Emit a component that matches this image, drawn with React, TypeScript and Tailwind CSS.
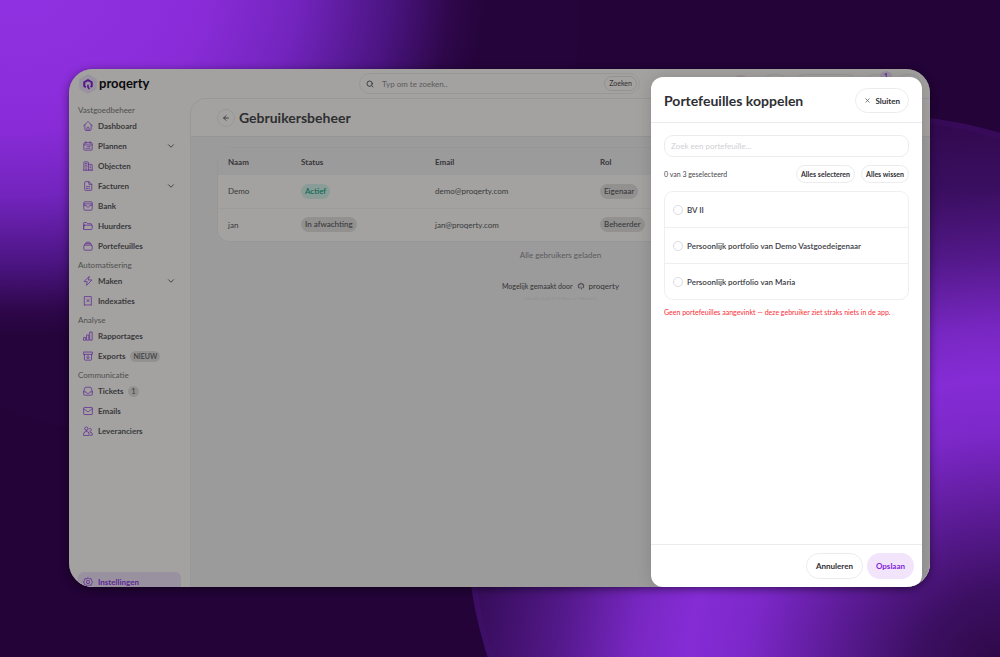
import React, { useState } from 'react';
import { ArrowLeft, ChevronDown, Search, X } from 'lucide-react';

type IconName =
  | 'home'
  | 'calendar'
  | 'building'
  | 'file'
  | 'bank'
  | 'folder'
  | 'stack'
  | 'bolt'
  | 'receipt'
  | 'chart'
  | 'archive'
  | 'inbox'
  | 'mail'
  | 'users'
  | 'settings';

const ICONS: Record<IconName, React.ReactNode> = {
  home: <path d="M1.5 11.5 10.6 2.6a2 2 0 0 1 2.8 0l9.1 8.9M4.5 9v11.5a2 2 0 0 0 2 2h11a2 2 0 0 0 2-2V9M9.5 22v-5a2.5 2.5 0 0 1 5 0v5" />,
  calendar: <path d="M2 5.5A1.5 1.5 0 0 1 3.5 4h17A1.5 1.5 0 0 1 22 5.5V20.5a1.5 1.5 0 0 1-1.5 1.5h-17A1.5 1.5 0 0 1 2 20.5ZM2 9.5h20M7 1.5v5M17 1.5v5M7 17.5h2M11 17.5h2M11 13.5h2M15 13.5h2M15 17.5h2" />,
  building: <path d="M2 22V3.5A1.5 1.5 0 0 1 3.5 2h8A1.5 1.5 0 0 1 13 3.5V22M13 8h7.5A1.5 1.5 0 0 1 22 9.5V22M1 22h22M5.5 6h4M5.5 10h4M5.5 14h4M7.5 22v-4M16.5 12h2M16.5 16h2M16.5 22v-2" />,
  file: <path d="M4 3a1.5 1.5 0 0 1 1.5-1.5H14L21 8v13a1.5 1.5 0 0 1-1.5 1.5h-14A1.5 1.5 0 0 1 4 21ZM14 1.5V8h7M8 18h4M8 13.5h8M15 18h1" />,
  bank: <path d="M2 4a2 2 0 0 1 2-2h16a2 2 0 0 1 2 2v16a2 2 0 0 1-2 2H4a2 2 0 0 1-2-2ZM2 7h20M2 10.5h5.5c.5 5.5 8.5 5.5 9 0H22" />,
  folder: <path d="M1.5 19.5V5A1.5 1.5 0 0 1 3 3.5h5.5l2.5 3h8A1.5 1.5 0 0 1 20.5 8v2M3.5 10H21a1.5 1.5 0 0 1 1.5 1.7l-1 7.5a1.5 1.5 0 0 1-1.5 1.3H3a1.5 1.5 0 0 1-1.5-1.5l.5-7.5A1.5 1.5 0 0 1 3.5 10Z" />,
  stack: <path d="M2 12a2 2 0 0 1 2-2h16a2 2 0 0 1 2 2v8a2 2 0 0 1-2 2H4a2 2 0 0 1-2-2ZM3.5 10l1.5-3.5h14l1.5 3.5M6.5 6.5 8 3h8l1.5 3.5" />,
  bolt: <path d="M14.5 1.5 2.5 13.5H10l-1.5 9 13-13h-8Z" />,
  receipt: <path d="M4 1.5h16v21l-3-2-2.5 2-2.5-2-2.5 2-2.5-2-3 2ZM9 8l6 6M15 8l-6 6" />,
  chart: <path d="M2 15.5h4.5V22H2ZM9.5 9.5H14V22H9.5ZM17 2.5h5V22h-5Z" />,
  archive: <path d="M1.5 2.5h21V8h-21ZM3.5 8v12.5A1.5 1.5 0 0 0 5 22h14a1.5 1.5 0 0 0 1.5-1.5V8M12 10.5V18M8.5 15l3.5 3.5 3.5-3.5" />,
  inbox: <path d="M1.5 14 4.5 4.5A2 2 0 0 1 6.5 3h11a2 2 0 0 1 2 1.5l3 9.5v6a2 2 0 0 1-2 2h-17a2 2 0 0 1-2-2ZM1.5 14H7c.5 5 9.5 5 10 0h5.5" />,
  mail: <path d="M1.5 5A1.5 1.5 0 0 1 3 3.5h18A1.5 1.5 0 0 1 22.5 5v14a1.5 1.5 0 0 1-1.5 1.5H3A1.5 1.5 0 0 1 1.5 19ZM2 6.5l8 6.5a3.2 3.2 0 0 0 4 0l8-6.5" />,
  users: <path d="M8 10.5a4 4 0 1 0 0-8 4 4 0 0 0 0 8ZM1.5 22v-2.5a6.5 6.5 0 0 1 13 0V22ZM17 12.5a3.3 3.3 0 1 0-2.5-5.5M17.5 22h5v-2a5.5 5.5 0 0 0-6-5.5" />,
  settings: <path d="m12 1.5 3 2.8 4.5-.3 1 4L23 12l-2.5 4-1 4-4.5-.3-3 2.8-3-2.8-4.5.3-1-4L1 12l2.5-4 1-4 4.5.3ZM12 16a4 4 0 1 0 0-8 4 4 0 0 0 0 8Z" />,
};

function Icon({ name }: { name: IconName }) {
  return (
    <svg
      viewBox="0 0 24 24"
      className="size-2.5 shrink-0 text-[#9440e8]"
      fill="none"
      stroke="currentColor"
      strokeWidth={1.8}
      strokeLinecap="round"
      strokeLinejoin="round"
      aria-hidden="true"
    >
      {ICONS[name]}
    </svg>
  );
}

interface NavItem {
  label: string;
  icon: IconName;
  expandable?: boolean;
  badge?: string;
}

const NAV: { title: string; items: NavItem[] }[] = [
  {
    title: 'Vastgoedbeheer',
    items: [
      { label: 'Dashboard', icon: 'home' },
      { label: 'Plannen', icon: 'calendar', expandable: true },
      { label: 'Objecten', icon: 'building' },
      { label: 'Facturen', icon: 'file', expandable: true },
      { label: 'Bank', icon: 'bank' },
      { label: 'Huurders', icon: 'folder' },
      { label: 'Portefeuilles', icon: 'stack' },
    ],
  },
  {
    title: 'Automatisering',
    items: [
      { label: 'Maken', icon: 'bolt', expandable: true },
      { label: 'Indexaties', icon: 'receipt' },
    ],
  },
  {
    title: 'Analyse',
    items: [
      { label: 'Rapportages', icon: 'chart' },
      { label: 'Exports', icon: 'archive', badge: 'NIEUW' },
    ],
  },
  {
    title: 'Communicatie',
    items: [
      { label: 'Tickets', icon: 'inbox', badge: '1' },
      { label: 'Emails', icon: 'mail' },
      { label: 'Leveranciers', icon: 'users' },
    ],
  },
];

const USERS = [
  { name: 'Demo', status: 'Actief', active: true, email: 'demo@proqerty.com', role: 'Eigenaar' },
  { name: 'jan', status: 'In afwachting', active: false, email: 'jan@proqerty.com', role: 'Beheerder' },
];

const PORTFOLIOS = ['BV II', 'Persoonlijk portfolio van Demo Vastgoedeigenaar', 'Persoonlijk portfolio van Maria'];

function Backdrop() {
  return (
    <svg
      className="absolute inset-0 size-full"
      viewBox="0 0 1000 657"
      preserveAspectRatio="xMidYMid slice"
      aria-hidden="true"
    >
      <defs>
        <radialGradient
          id="glow-a"
          gradientUnits="userSpaceOnUse"
          cx="0"
          cy="0"
          r="1"
          gradientTransform="translate(20 -10) scale(465 345)"
        >
          <stop offset="0" stopColor="#9132e2" />
          <stop offset="0.4" stopColor="#892cd8" />
          <stop offset="0.6" stopColor="#7224bd" />
          <stop offset="0.8" stopColor="#4a1480" />
          <stop offset="0.93" stopColor="#2e074a" />
          <stop offset="1" stopColor="#25043b" />
        </radialGradient>
        <radialGradient
          id="glow-b"
          gradientUnits="userSpaceOnUse"
          cx="0"
          cy="0"
          r="1"
          gradientTransform="translate(1010 680) scale(600 560)"
        >
          <stop offset="0" stopColor="#2a0640" />
          <stop offset="0.16" stopColor="#3c0f62" />
          <stop offset="0.3" stopColor="#5c1b96" />
          <stop offset="0.44" stopColor="#7c28c9" />
          <stop offset="0.54" stopColor="#852cd6" />
          <stop offset="0.63" stopColor="#7827c2" />
          <stop offset="0.76" stopColor="#521888" />
          <stop offset="0.88" stopColor="#3a0e60" />
          <stop offset="1" stopColor="#32094f" />
        </radialGradient>
      </defs>
      <rect width="1000" height="657" fill="#230338" />
      <circle cx="150" cy="5" r="430" fill="url(#glow-a)" />
      <circle cx="880" cy="528" r="413" fill="url(#glow-b)" />
      <circle cx="880" cy="528" r="410" fill="none" stroke="#5a1a96" strokeOpacity="0.12" strokeWidth="6" />
    </svg>
  );
}

function LogoMark({ className }: { className: string }) {
  return (
    <svg viewBox="0 0 24 24" className={className} fill="none" stroke="currentColor" aria-hidden="true">
      <path d="M7.5 18.5 4.5 16V8.5L12 4l7.5 4.5V16L17 18" strokeWidth={4} strokeLinejoin="round" />
      <path d="M12 13.5v5l3 3.5" strokeWidth={3.2} />
    </svg>
  );
}

function Sidebar() {
  return (
    <aside className="flex w-[121px] shrink-0 flex-col px-[9px] pt-1.5">
      <nav className="flex flex-col gap-[3px]">
        {NAV.map((section) => (
          <section key={section.title}>
            <h2 className="h-3 text-[8px] leading-3 text-[#7c7c80]">{section.title}</h2>
            <ul>
              {section.items.map((item) => (
                <li key={item.label}>
                  <a href="#" className="flex h-5 items-center gap-[5px] px-[5px] text-[8px] font-bold text-[#5a5a5f]">
                    <Icon name={item.icon} />
                    {item.label}
                    {item.badge && (
                      <span className="rounded-full bg-[#e4e3e2] px-[3px] text-[7px] leading-[11px] font-medium">
                        {item.badge}
                      </span>
                    )}
                    {item.expandable && <ChevronDown className="ml-auto size-2.5" strokeWidth={2.2} />}
                  </a>
                </li>
              ))}
            </ul>
          </section>
        ))}
      </nav>
      <a
        href="#"
        className="mt-auto -mb-1 flex h-[19px] items-center gap-[5px] rounded-md bg-[#efe2fb] px-[5px] text-[8px] font-bold text-[#9440e8]"
      >
        <Icon name="settings" />
        Instellingen
      </a>
    </aside>
  );
}

function TopBar() {
  return (
    <header className="grid h-[29px] grid-cols-[1fr_281px_1fr] items-center px-[9px]">
      <div className="flex items-center gap-px">
        <span className="relative flex size-5 items-center justify-center text-[#8020dd]">
          <svg viewBox="0 0 20 20" className="absolute size-5" aria-hidden="true">
            <path d="M10 1 18 5.5v9L10 19l-8-4.5v-9Z" fill="#efe6fa" stroke="#efe6fa" strokeWidth="1.5" strokeLinejoin="round" />
          </svg>
          <LogoMark className="relative size-3" />
        </span>
        <span className="pb-0.5 text-[13px] leading-4 font-bold text-[#111116]">proqerty</span>
      </div>
      <form className="flex h-[21px] items-center gap-2 rounded-full border border-[#ececee] pr-0.5 pl-1.5">
        <Search className="size-2 text-[#47474c]" strokeWidth={2.5} />
        <input
          type="search"
          aria-label="Zoeken"
          placeholder="Typ om te zoeken.."
          className="min-w-0 flex-1 bg-transparent text-[8px] outline-none placeholder:text-[#8f8f94]"
        />
        <button type="button" className="h-[15px] rounded-full border border-[#e4e4e7] px-1 text-[7px] font-medium text-[#55555a]">
          Zoeken
        </button>
      </form>
      <div className="flex items-center justify-end gap-2">
        <span className="mr-1.5 h-[18px] w-[17px] rounded-full bg-[#f3e2f0]" />
        <span className="h-[19px] w-6 rounded-full border border-[#ececee]" />
        <span className="h-[19px] w-[62px] rounded-full border border-[#ececee]" />
        <span className="relative h-[19px] w-6 rounded-full border border-[#ececee]">
          <span className="absolute -top-1 -right-1 rounded-full bg-[#eedffb] px-1 text-[7px] leading-[11px] font-semibold text-[#8a2be2]">
            1
          </span>
        </span>
        <span className="h-[19px] w-6 rounded-full border border-[#ececee]" />
      </div>
    </header>
  );
}

function UsersTable() {
  return (
    <div className="overflow-hidden rounded-xl border border-[#ededf0] bg-[#fffefa]">
      <table className="w-full table-fixed text-left text-[8px] text-[#5a5a60]">
        <colgroup>
          <col className="w-[73px]" />
          <col className="w-[134px]" />
          <col className="w-[165px]" />
          <col />
        </colgroup>
        <thead className="bg-[#f5f3f4] text-[#55555a]">
          <tr className="h-[27px]">
            {['Naam', 'Status', 'Email', 'Rol'].map((h) => (
              <th key={h} className="pl-2.5 font-bold">
                {h}
              </th>
            ))}
          </tr>
        </thead>
        <tbody>
          {USERS.map((user) => (
            <tr key={user.email} className="h-[33px] border-b border-[#f4f4f5] last:border-0">
              <td className="pl-2.5">{user.name}</td>
              <td className="pl-2.5">
                <span
                  className={`inline-block rounded-full px-1 leading-[15px] font-medium ${
                    user.active ? 'bg-[#d8f5ec] text-[#10a37f]' : 'bg-[#e4e3e2]'
                  }`}
                >
                  {user.status}
                </span>
              </td>
              <td className="pl-2.5">{user.email}</td>
              <td className="pl-2.5">
                <span className="inline-block rounded-full bg-[#e4e3e2] px-1 leading-[15px] font-medium">{user.role}</span>
              </td>
            </tr>
          ))}
        </tbody>
      </table>
    </div>
  );
}

function PortfolioDrawer() {
  const [query, setQuery] = useState('');
  const [selected, setSelected] = useState<string[]>([]);

  const toggle = (name: string) =>
    setSelected((prev) => (prev.includes(name) ? prev.filter((n) => n !== name) : [...prev, name]));

  const visible = PORTFOLIOS.filter((p) => p.toLowerCase().includes(query.toLowerCase()));

  return (
    <div
      role="dialog"
      aria-labelledby="drawer-title"
      className="absolute top-2 right-2 bottom-0 flex w-[271px] flex-col rounded-xl bg-white text-[#2e2e33] shadow-[0_0_16px_rgba(0,0,0,0.15)]"
    >
      <div className="flex h-[46px] shrink-0 items-center justify-between border-b border-[#ececee] px-[13px] pt-0.5">
        <h2 id="drawer-title" className="text-[14px] font-bold">
          Portefeuilles koppelen
        </h2>
        <button type="button" className="flex h-[25px] items-center gap-1 rounded-full border border-[#ececee] px-2 text-[8px] font-bold">
          <X className="size-[7px]" strokeWidth={2} />
          Sluiten
        </button>
      </div>

      <div className="flex-1 px-[13px] pt-3">
        <input
          type="text"
          aria-label="Zoek een portefeuille"
          placeholder="Zoek een portefeuille..."
          value={query}
          onChange={(e) => setQuery(e.target.value)}
          className="block h-[22px] w-full rounded-[9px] border border-[#ececee] px-1.5 text-[8px] outline-none placeholder:text-[#cfcfd3]"
        />

        <div className="mt-2 flex items-center gap-1.5">
          <span className="mr-auto text-[7px] text-[#47474c]">
            {selected.length} van {PORTFOLIOS.length} geselecteerd
          </span>
          <button
            type="button"
            onClick={() => setSelected(PORTFOLIOS)}
            className="h-[18px] rounded-full border border-[#ececee] px-1 text-[7px] font-bold"
          >
            Alles selecteren
          </button>
          <button
            type="button"
            onClick={() => setSelected([])}
            className="h-[18px] rounded-full border border-[#ececee] px-1 text-[7px] font-bold"
          >
            Alles wissen
          </button>
        </div>

        <ul className="mt-2 divide-y divide-[#efeff1] rounded-[9px] border border-[#efeff1]">
          {visible.map((name) => (
            <li key={name}>
              <label className="flex h-[35px] items-center gap-1 px-2 text-[8px] font-semibold text-[#3a3a3f]">
                <input
                  type="checkbox"
                  checked={selected.includes(name)}
                  onChange={() => toggle(name)}
                  className="size-2.5 appearance-none rounded-full border border-[#dcdce0] checked:border-[#8a2be2] checked:bg-[#8a2be2]"
                />
                {name}
              </label>
            </li>
          ))}
        </ul>

        {selected.length === 0 && (
          <p className="mt-2 text-[7px] leading-[9px] text-[#fb2c36]">
            Geen portefeuilles aangevinkt — deze gebruiker ziet straks niets in de app.
          </p>
        )}
      </div>

      <div className="flex h-[43px] shrink-0 items-center justify-end gap-1 border-t border-[#ececee] px-2 text-[8px] font-bold">
        <button type="button" className="h-[26px] rounded-full border border-[#ececee] px-[9px]">
          Annuleren
        </button>
        <button type="button" className="h-[26px] rounded-full bg-[#f1e4fb] px-[9px] text-[#8325dc]">
          Opslaan
        </button>
      </div>
    </div>
  );
}

export default function App() {
  return (
    <div className="relative flex min-h-screen flex-col overflow-hidden bg-[#230338] pt-[69px] pr-[70px] pb-[70px] pl-[69px] font-['Lato','Liberation_Sans',sans-serif]">
      <Backdrop />

      <div className="relative flex flex-1 flex-col overflow-hidden rounded-3xl bg-[#fffefa] shadow-[0_2px_8px_rgba(0,0,0,0.5)]">
        <TopBar />
        <div className="flex flex-1">
          <Sidebar />
          <main className="flex flex-1 flex-col overflow-hidden rounded-tl-2xl border-t border-l border-[#eeedf0] bg-[#f5f3f4]">
            <div className="flex h-[38px] items-center gap-1 border-b border-[#eae9ec] bg-[#fffefa] px-[26px]">
              <button
                type="button"
                aria-label="Terug"
                className="flex size-[18px] items-center justify-center rounded-full border border-[#ececee] text-[#47474c]"
              >
                <ArrowLeft className="size-2" strokeWidth={2.5} />
              </button>
              <h1 className="text-[14px] font-bold text-[#4a4a4f]">Gebruikersbeheer</h1>
            </div>
            <div className="px-[26px] pt-2.5">
              <UsersTable />
              <p className="mt-2 text-center text-[8px] leading-[10px] text-[#8f8f94]">Alle gebruikers geladen</p>
              <div className="mt-5 flex items-center justify-center gap-1 text-[7px] leading-3 font-medium text-[#5a5a60]">
                Mogelijk gemaakt door
                <LogoMark className="size-2 text-[#85858a]" />
                <span className="text-[8px]">proqerty</span>
              </div>
              <p className="mt-1 text-center text-[4px] leading-[5px] text-[#e2e0e4]">c9feca8e-3cd2-4c70-9bce-c37f86d2af7c</p>
            </div>
          </main>
        </div>

        {/* Page overlay behind the drawer */}
        <div className="absolute inset-0 bg-black/36" />
        <PortfolioDrawer />
      </div>
    </div>
  );
}
